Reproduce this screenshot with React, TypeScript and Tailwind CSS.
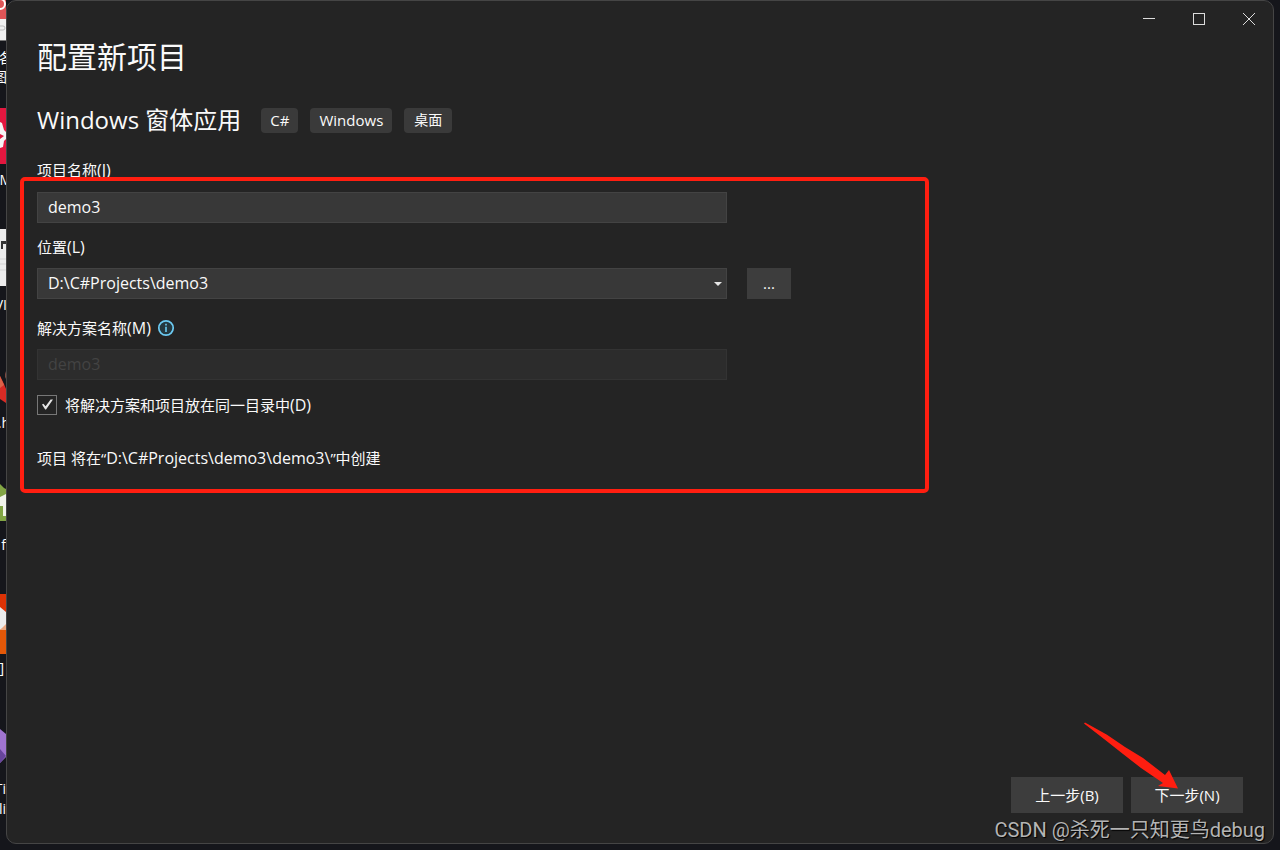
import React, { useState } from 'react';

interface TagProps {
  text: string;
}

interface FieldLabelProps {
  htmlFor: string;
  text: string;
  accessKey: string;
}

const tags = ['C#', 'Windows', '桌面'];

const Tag: React.FC<TagProps> = ({ text }) => (
  <li className="flex h-[25px] items-center rounded bg-[#3a3a3a] px-[9px] text-[15px] leading-5 last:px-[10px] last:text-[14px]">
    {text}
  </li>
);

const FieldLabel: React.FC<FieldLabelProps> = ({ htmlFor, text, accessKey }) => (
  <label htmlFor={htmlFor} className="block text-[15px] leading-5">
    {text}
    <span className="text-[16px]">({accessKey})</span>
  </label>
);

// The desktop icons that peek out from behind the window
const DesktopStrip: React.FC = () => (
  <aside className="relative w-[6px] shrink-0 overflow-hidden text-[14px] leading-5 text-white">
    <svg className="absolute left-0 top-0" width="14" height="850" viewBox="0 0 14 850">
      <rect width="14" height="19" fill="#df5557" />
      <circle cx="0" cy="4" r="5" fill="none" stroke="#fff" strokeWidth="2" />
      <rect y="19" width="14" height="21" fill="#f0f0f0" />
      <rect x="-6" y="26" width="11" height="4" rx="2" fill="none" stroke="#bbb" />
      <rect y="40" width="14" height="1" fill="#777" />
      <rect y="108" width="14" height="56" fill="#e3173f" />
      <path d="M0 122L2 123L4 130L6 132V139L4 141L3 147L0 148Z" fill="#f4f4f4" />
      <path d="M0 134L4 136L0 139Z" fill="#e3173f" />
      <rect y="229" width="14" height="57" fill="#ececec" />
      <path d="M1 241H6V244H3V249H1Z" fill="#333" />
      <path d="M0 259H6M0 264H6M0 270H6" stroke="#d4d4d4" />
      <path d="M0 376L4 384L6 389V403L0 399Z" fill="#d92b25" />
      <path d="M0 376L4 385L0 388Z" fill="#dd6248" />
      <path d="M6 371L5 374V377L6 379Z" fill="#7a4a42" />
      <path d="M0 484L4 488L6 489V521H0Z" fill="#82a544" />
      <path d="M0 497L6 494V516H3V506H0Z" fill="#f1f4ea" />
      <rect y="594" width="14" height="60" fill="#e45808" />
      <rect y="594" width="14" height="24" fill="#dc3205" />
      <path d="M0 607L6 612V626L0 630Z" fill="#ececec" />
      <path d="M0 630L6 624V630Z" fill="#eba77f" />
      <path d="M0 729L6 734V757L0 763Z" fill="#a074d0" />
      <path d="M0 749L6 756L0 763Z" fill="#67459b" />
    </svg>
    <span className="absolute right-[-7px] top-[48px]">各</span>
    <span className="absolute right-[-1px] top-[67px]">图</span>
    <span className="absolute right-[-6px] top-[170px]">M</span>
    <span className="absolute right-[-1px] top-[295px]">VI</span>
    <span className="absolute right-[-4px] top-[413px]">.h</span>
    <span className="absolute right-0 top-[535px]">f</span>
    <span className="absolute right-[2px] top-[658px]">]</span>
    <span className="absolute right-0 top-[779px]">Ti</span>
    <span className="absolute right-0 top-[799px]">li</span>
  </aside>
);

const TitleBar: React.FC = () => (
  <header className="-mr-px flex h-9 justify-end text-[#dcdcdc]">
    <button type="button" aria-label="最小化" className="flex w-[50px] items-center justify-center">
      <svg width="14" height="14" viewBox="0 0 14 14" stroke="currentColor">
        <path d="M1 6.5H13" />
      </svg>
    </button>
    <button type="button" aria-label="最大化" className="flex w-[50px] items-center justify-center">
      <svg width="14" height="14" viewBox="0 0 14 14" fill="none" stroke="currentColor">
        <rect x="1.5" y="1.5" width="11" height="11" />
      </svg>
    </button>
    <button type="button" aria-label="关闭" className="flex w-[50px] items-center justify-center">
      <svg width="14" height="14" viewBox="0 0 14 14" stroke="currentColor">
        <path d="M1 1L13 13M13 1L1 13" />
      </svg>
    </button>
  </header>
);

const ProjectForm: React.FC = () => {
  const [name, setName] = useState('demo3');
  const [sameFolder, setSameFolder] = useState(true);

  return (
    <form className="mt-6">
      <FieldLabel htmlFor="project-name" text="项目名称" accessKey="J" />
      <input
        id="project-name"
        type="text"
        value={name}
        onChange={(e) => setName(e.target.value)}
        className="mt-3 block h-[31px] w-full max-w-[690px] border border-[#434343] bg-[#383838] px-[10px] pb-[2px] text-[16px] outline-none"
      />

      <div className="mt-[14px]">
        <FieldLabel htmlFor="location" text="位置" accessKey="L" />
        <div className="mt-[11px] flex gap-5">
          <div className="relative w-full max-w-[690px]">
            <select
              id="location"
              className="block h-[31px] w-full appearance-none border border-[#434343] bg-[#383838] px-[10px] pb-[2px] text-[16px] outline-none"
            >
              <option>D:\C#Projects\demo3</option>
            </select>
            <svg
              className="pointer-events-none absolute right-[5px] top-[14px]"
              width="8"
              height="4"
              viewBox="0 0 8 4"
              fill="#e6e6e6"
            >
              <path d="M0 0H8L4 4Z" />
            </svg>
          </div>
          <button type="button" className="h-[31px] w-11 shrink-0 bg-[#3d3d3d] text-[15px]">
            ...
          </button>
        </div>
      </div>

      <div className="mt-[19px]">
        <div className="flex items-center gap-[6px]">
          <FieldLabel htmlFor="solution-name" text="解决方案名称" accessKey="M" />
          <svg width="18" height="18" viewBox="0 0 18 18" fill="none" stroke="#6ccbf3">
            <circle cx="9" cy="9" r="7.2" fill="#24383f" strokeWidth="1.7" />
            <path d="M9 7.8V13M9 4.8V6.4" strokeWidth="1.6" />
          </svg>
        </div>
        <input
          id="solution-name"
          type="text"
          value={name}
          disabled
          className="mt-[11px] block h-[31px] w-full max-w-[690px] border border-[#333333] bg-[#2c2c2c] px-[10px] pb-[2px] text-[16px] text-[#434343]"
        />
      </div>

      <div className="mt-[15px] flex items-center gap-2">
        <div className="relative size-5">
          <input
            id="same-folder"
            type="checkbox"
            checked={sameFolder}
            onChange={(e) => setSameFolder(e.target.checked)}
            className="block size-5 appearance-none border border-[#777777] bg-[#242424]"
          />
          {sameFolder && (
            <svg className="pointer-events-none absolute left-1 top-1" width="12" height="12" viewBox="0 0 12 12">
              <path d="M1 5.6L2.4 4.8L4.6 7.2L9.6 0.4H12L5 10.4H4.2Z" fill="#e6e6e6" />
            </svg>
          )}
        </div>
        <FieldLabel htmlFor="same-folder" text="将解决方案和项目放在同一目录中" accessKey="D" />
      </div>

      <p className="mt-[33px] text-[15px] leading-5">
        项目 将在“
        <span className="text-[16px]">
          D:\C#Projects\{name}\{name}\
        </span>
        ”中创建
      </p>
    </form>
  );
};

const WizardFooter: React.FC = () => (
  <footer className="relative mt-auto mb-[30px] flex justify-end gap-2 pr-[30px] text-[15px]">
    <button type="button" className="h-9 w-28 bg-[#3d3d3d]">
      上一步(B)
    </button>
    <button type="button" className="h-9 w-28 bg-[#3d3d3d]">
      下一步(N)
    </button>
    <svg
      className="pointer-events-none absolute bottom-6 right-[95px]"
      width="94"
      height="67"
      viewBox="0 0 94 67"
      fill="#ff1e10"
    >
      <path d="M0 1.5L1 0.5L23 12.8L41 25L59 36L81 53L85 48L94 66.5L74 64L79 61L57 46L39 32L20 17Z" />
    </svg>
  </footer>
);

const App: React.FC = () => (
  <div className="relative flex min-h-screen overflow-hidden bg-[#15161b] font-['Open_Sans','Noto_Sans_CJK_SC',sans-serif] text-[#fafafa]">
    <DesktopStrip />
    <main className="relative mr-[6px] mb-[6px] flex flex-1 flex-col rounded-[10px] border border-[#454545] bg-[#242424]">
      <TitleBar />
      <section className="px-[30px]">
        <h1 className="text-[30px] leading-10">配置新项目</h1>
        <div className="mt-[27px] flex items-center gap-5">
          <h2 className="text-[24px] leading-8">Windows 窗体应用</h2>
          <ul className="flex gap-3">
            {tags.map((tag) => (
              <Tag key={tag} text={tag} />
            ))}
          </ul>
        </div>
        <ProjectForm />
      </section>
      <WizardFooter />
      <div className="pointer-events-none absolute left-[13px] top-[176px] h-[316px] w-[909px] rounded-[5px] border-4 border-[#ff1e10]" />
    </main>
    <p className="pointer-events-none absolute bottom-2 right-[15px] font-[Roboto,'Noto_Sans_CJK_SC',sans-serif] text-[20px] leading-6 text-[#b4b4b4] [text-shadow:1px_1px_1px_#000000]">
      CSDN @杀死一只知更鸟debug
    </p>
  </div>
);

export default App;
